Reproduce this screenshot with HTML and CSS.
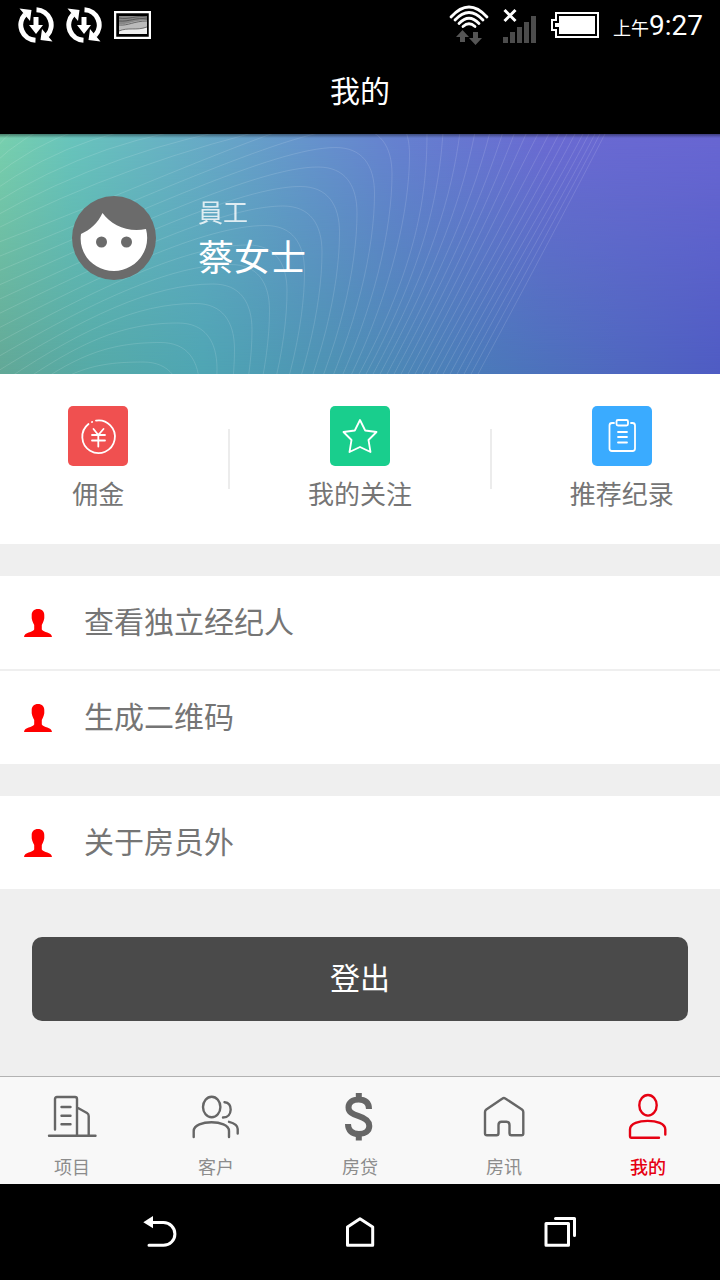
FILE: index.html
```html
<!DOCTYPE html>
<html lang="zh-CN">
<head>
    <meta charset="UTF-8">
    <meta name="viewport" content="width=device-width, initial-scale=1.0">
    <title>我的</title>
    <link rel="stylesheet" href="styles.css">
</head>
<body>
    <!-- Shared shapes -->
    <svg class="sprite" width="0" height="0" aria-hidden="true">
        <symbol id="sync" viewBox="0 0 36 36">
            <path d="M17.500 33.300A15.300 15.300 0 0 1 7 7.500" fill="none" stroke="#fff" stroke-width="5"/>
            <path d="M18.500 2.700A15.300 15.300 0 0 1 29 28.500" fill="none" stroke="#fff" stroke-width="5"/>
            <path d="M1.500 1.500L13.500 3L12 14Z M34.500 34.500L22.500 33L24 22Z" fill="#fff"/>
            <path d="M15.500 10H20.500V18H25L18 27L11 18H15.500Z" fill="#fff"/>
        </symbol>
        <symbol id="person" viewBox="0 0 28 28">
            <path d="M14 0C18 0 20.500 2.500 20.300 6.500C20.800 10.500 19 13.500 17.800 16V20.500C19.500 23.800 27.500 22.800 28 28H0C.5 22.800 8.500 23.800 10.200 20.500V16C9 13.500 7.200 10.500 7.700 6.500C7.500 2.500 10 0 14 0Z" fill="#f00"/>
        </symbol>
    </svg>

    <div class="status-bar">
        <div class="status-group">
            <svg width="36" height="36"><use href="#sync"/></svg>
            <svg width="36" height="36"><use href="#sync"/></svg>
            <svg width="37" height="28" viewBox="0 0 37 28">
                <rect x="1" y="1" width="35" height="26" fill="#000" stroke="#fff" stroke-width="2.500"/>
                <rect x="5" y="5" width="28" height="18" fill="#888"/>
                <path d="M5 13C14 14 20 9 33 9V23H5Z" fill="#bbb"/>
                <path d="M5 20C14 16 22 20 33 16V23H5Z" fill="#eee"/>
                <path d="M5 7C15 9 22 4 33 6M5 10C15 11 22 6 33 8M5 14C14 15 20 10 33 10M5 20C14 16 22 20 33 16" fill="none" stroke="#444" stroke-width=".7"/>
            </svg>
        </div>
        <div class="status-group">
            <svg width="40" height="40" viewBox="0 0 40 40">
                <g fill="none" stroke="#fff" stroke-width="2.800" stroke-linecap="round">
                    <path d="M2 12Q20 -8 38 12"/>
                    <path d="M6 15Q20 0 34 15"/>
                    <path d="M10 18.500Q20 8 30 18.500"/>
                    <path d="M14 21.500Q20 16 26 21.500"/>
                </g>
                <path d="M13.500 25L20 32H16V37H11V32H7Z M24 27H29V33H33L26.500 40L20 33H24Z" fill="#555"/>
            </svg>
            <svg width="34" height="36" viewBox="0 0 34 36">
                <path d="M0 30H5V36H0Z M7 25H12V36H7Z M14 20H19V36H14Z M21 15H26V36H21Z M28 9H33V36H28Z" fill="#4c4c4c"/>
                <path d="M1.500 3L12.500 14M12.500 3L1.500 14" stroke="#fff" stroke-width="3"/>
            </svg>
            <svg width="48" height="26" viewBox="0 0 48 26">
                <path d="M5 1H47V25H5V18H1V8H5Z" fill="#000" stroke="#fff" stroke-width="2"/>
                <path d="M8 4H44V22H8V15H4V11H8Z" fill="#fff"/>
            </svg>
            <div class="clock"><span class="clock-period">上午</span>9:27</div>
        </div>
    </div>

    <header class="title-bar">
        <h1>我的</h1>
    </header>

    <main>
        <section class="profile">
            <svg class="waves" id="waves" viewBox="0 0 720 240" preserveAspectRatio="none" aria-hidden="true"></svg>
            <svg class="avatar" width="84" height="84" viewBox="0 0 84 84">
                <circle cx="42" cy="42" r="42" fill="#6b6b6b"/>
                <path d="M9 38C18 34 26 27 30.500 17C39 29 56 37 74 33C80 56 62 75 42 75C22 75 6 58 9 38Z" fill="#fff"/>
                <circle cx="29.500" cy="46" r="5.500" fill="#6b6b6b"/>
                <circle cx="54.500" cy="46" r="5.500" fill="#6b6b6b"/>
            </svg>
            <div class="profile-text">
                <p class="role">員工</p>
                <p class="name">蔡女士</p>
            </div>
        </section>

        <section class="shortcuts">
            <a class="shortcut" href="#">
                <svg class="shortcut-icon red" width="60" height="60" viewBox="0 0 60 60">
                    <path d="M28 14.700A16.300 16.300 0 1 1 20.500 18"/>
                    <path d="M24 16L24.200 15.900"/>
                    <path d="M25.500 23L30.300 29L35.500 23M24 29H37M24 34.500H37M30.300 29V40.500"/>
                </svg>
                <span>佣金</span>
            </a>
            <span class="divider"></span>
            <a class="shortcut" href="#">
                <svg class="shortcut-icon green" width="60" height="60" viewBox="0 0 60 60">
                    <path d="M30 14L35.200 24.500L46.500 26L38.500 34L40.500 46L30 41L19.500 46L21.500 34L13.500 26L24.800 24.500Z"/>
                </svg>
                <span>我的关注</span>
            </a>
            <span class="divider"></span>
            <a class="shortcut" href="#">
                <svg class="shortcut-icon blue" width="60" height="60" viewBox="0 0 60 60">
                    <path d="M22 17H20Q17.500 17 17.500 19.500V42.500Q17.500 45 20 45H40.500Q43 45 43 42.500V19.500Q43 17 40.500 17H39"/>
                    <rect x="24.500" y="14" width="11.500" height="5.500" rx="1.500"/>
                    <path d="M26 26H35M26 31H35M26 36.500H35"/>
                </svg>
                <span>推荐纪录</span>
            </a>
        </section>

        <nav class="menu">
            <a class="menu-item" href="#"><svg width="28" height="28"><use href="#person"/></svg>查看独立经纪人</a>
            <a class="menu-item" href="#"><svg width="28" height="28"><use href="#person"/></svg>生成二维码</a>
        </nav>
        <nav class="menu">
            <a class="menu-item" href="#"><svg width="28" height="28"><use href="#person"/></svg>关于房员外</a>
        </nav>

        <button class="logout" type="button">登出</button>
    </main>

    <nav class="tab-bar">
        <a class="tab" href="#">
            <svg width="48" height="48" viewBox="0 0 48 48">
                <path d="M7 37.500V7Q7 5 9 5H27Q29 5 29 7V43.500M1 43.700H47.500M13.500 15H22.500M13.500 23.700H22.500M13.500 32.300H22.500M30 16L39 21Q40.700 22 40.700 24V43"/>
            </svg>
            <span>项目</span>
        </a>
        <a class="tab" href="#">
            <svg width="48" height="48" viewBox="0 0 48 48">
                <ellipse cx="19.700" cy="15" rx="8.700" ry="10.300"/>
                <path d="M1.700 45V39C1.700 33 11 30.300 19.500 30.300S37 33 37 39V45M32.500 10.300C41 10 41 25.500 31 25.500M37 29.800C42 31 45.700 33 45.700 37V41.500"/>
            </svg>
            <span>客户</span>
        </a>
        <a class="tab" href="#">
            <svg class="bold" width="48" height="48" viewBox="0 0 48 48">
                <path d="M33 17C33 10.500 29 7.500 22.800 7.500C16.500 7.500 12.500 10.500 12.500 15.300C12.500 20 16 22 22.800 24.200C30 26.400 33.300 29 33.300 34C33.300 39 29 42 22.800 42C16 42 12 38.500 12 32M22.800 1V8M22.800 41V48.500"/>
            </svg>
            <span>房贷</span>
        </a>
        <a class="tab" href="#">
            <svg width="48" height="48" viewBox="0 0 48 48">
                <path d="M22.500 6.500Q23.900 5.500 25.300 6.500L42 17.500Q43.300 18.400 43.300 20V41.500Q43.300 43.300 41.500 43.300H31.500Q29.500 43.300 29.500 41.300V33Q29.500 29.700 26.500 29.700H21.500Q18.500 29.700 18.500 33V41.300Q18.500 43.300 16.500 43.300H7Q5 43.300 5 41.500V20Q5 18.400 6.300 17.500Z"/>
            </svg>
            <span>房讯</span>
        </a>
        <a class="tab active" href="#">
            <svg width="48" height="48" viewBox="0 0 48 48">
                <ellipse cx="24" cy="13.300" rx="8.700" ry="10.300"/>
                <path d="M35 45.700H7.500Q6 45.700 6 44V37.500C6 31.500 15 28.900 23.700 28.900S41.300 31.500 41.300 37.500V42.500"/>
            </svg>
            <span>我的</span>
        </a>
    </nav>

    <div class="system-nav">
        <button type="button" aria-label="返回">
            <svg width="36" height="36" viewBox="0 0 36 36">
                <path d="M10 8.500H21.500A11.400 11.400 0 0 1 21.500 31.300H7"/>
                <path d="M1.300 8.300L11 2V14.300Z" fill="#fff" stroke="none"/>
            </svg>
        </button>
        <button type="button" aria-label="主页">
            <svg width="36" height="36" viewBox="0 0 36 36">
                <path d="M5.500 31.300V13L18 4.800L30.700 13V31.300Z"/>
            </svg>
        </button>
        <button type="button" aria-label="最近">
            <svg width="36" height="36" viewBox="0 0 36 36">
                <path d="M4 9.500H26.500V31.300H4ZM13.500 4.500H32.500V21.500"/>
            </svg>
        </button>
    </div>

    <script src="waves.js"></script>
</body>
</html>
```

FILE: styles.css
```css
:root {
    --accent: #e60012;
    --text-color: #757575;
    --icon-color: #666;
    --page-color: #efefef;
}

* {
    box-sizing: border-box;
    margin: 0;
    padding: 0;
}

body {
    display: flex;
    flex-direction: column;
    min-height: 100vh;
    font-family: Roboto, "Noto Sans CJK SC", sans-serif;
    background-color: var(--page-color);
    color: var(--text-color);
}

a {
    color: inherit;
    text-decoration: none;
}

svg {
    flex: none;
}

button {
    border: none;
    font-family: inherit;
    cursor: pointer;
}

.sprite {
    position: absolute;
}

.status-bar {
    display: flex;
    justify-content: space-between;
    align-items: center;
    height: 50px;
    padding: 0 17px 0 18px;
    background: #000;
    color: #fff;
}

.status-group {
    display: flex;
    align-items: center;
    gap: 12px;
}

.status-group + .status-group {
    gap: 14px;
}

.clock {
    padding-top: 4px;
    font-size: 28px;
    line-height: 36px;
}

.clock-period {
    font-size: 18px;
}

.title-bar {
    display: flex;
    justify-content: center;
    align-items: center;
    height: 84px;
    background: #000;
    color: #fff;
}

.title-bar h1 {
    font-size: 30px;
    font-weight: 400;
    line-height: 40px;
}

main {
    flex: 1;
}

/* Profile banner: the upper gradient fades into the lower one */
.profile {
    position: relative;
    display: flex;
    align-items: flex-start;
    gap: 42px;
    height: 240px;
    padding: 62px 72px;
    background: linear-gradient(to right, #62a897 0%, #55aaa8 13%, #4fa6b4 28%, #4e93b4 46%, #4b7aba 67%, #4f68c0 86%, #4f5cc4 100%);
    color: #fff;
}

.profile::before {
    content: "";
    position: absolute;
    inset: 0;
    background: linear-gradient(to right, #78d0ae 0%, #68c4bc 10%, #68b0c4 24%, #6694cc 42%, #667fd0 56%, #6a6ad2 76%, #6866d2 100%);
    -webkit-mask-image: linear-gradient(to bottom, #000, transparent);
    mask-image: linear-gradient(to bottom, #000, transparent);
}

.profile::after {
    content: "";
    position: absolute;
    inset: 0 0 auto;
    height: 4px;
    background: linear-gradient(to bottom, rgba(0, 0, 0, 0.4), transparent);
}

.waves {
    position: absolute;
    inset: 0;
    width: 100%;
    height: 100%;
    fill: none;
    stroke: rgba(255, 255, 255, 0.13);
    stroke-width: 1;
}

.avatar,
.profile-text {
    position: relative;
}

.role {
    font-size: 25px;
    line-height: 36px;
    opacity: 0.8;
}

.name {
    font-size: 36px;
    line-height: 54px;
}

/* Shortcuts */
.shortcuts {
    display: grid;
    grid-template-columns: 3fr 1fr 3fr 1fr 3fr;
    background: #fff;
}

.shortcut {
    display: flex;
    flex-direction: column;
    align-items: center;
    gap: 8px;
    padding: 32px 0 28px;
    font-size: 26px;
    line-height: 42px;
    white-space: nowrap;
}

.shortcut-icon {
    border-radius: 5px;
    fill: none;
    stroke: #fff;
    stroke-width: 1.8;
    stroke-linecap: round;
    stroke-linejoin: round;
}

.red {
    background: #f05050;
}

.green {
    background: #19ce8d;
}

.blue {
    background: #3aabff;
}

.divider {
    align-self: center;
    justify-self: center;
    width: 2px;
    height: 60px;
    background: #ececec;
}

/* Menu rows */
.menu {
    margin-top: 32px;
    background: #fff;
}

.menu-item {
    display: flex;
    align-items: center;
    gap: 32px;
    height: 93px;
    padding: 0 24px;
    font-size: 30px;
    line-height: 40px;
}

.menu-item + .menu-item {
    height: 95px;
    border-top: 2px solid var(--page-color);
}

.logout {
    display: block;
    width: calc(100% - 64px);
    height: 84px;
    margin: 48px 32px;
    border-radius: 10px;
    background: #4a4a4a;
    color: #fff;
    font-size: 30px;
    line-height: 40px;
}

/* Bottom tabs */
.tab-bar {
    display: flex;
    border-top: 1px solid #b2b2b2;
    background: #f8f8f8;
}

.tab {
    flex: 1;
    display: flex;
    flex-direction: column;
    align-items: center;
    gap: 16px;
    padding: 15px 0 4px;
    font-size: 18px;
    line-height: 24px;
    color: #8c8c8c;
}

.tab svg {
    overflow: visible;
    fill: none;
    stroke: var(--icon-color);
    stroke-width: 2.4;
    stroke-linecap: round;
    stroke-linejoin: round;
}

.tab .bold {
    stroke-width: 6;
    stroke-linecap: butt;
}

.tab.active {
    color: var(--accent);
    font-weight: 500;
}

.tab.active svg {
    stroke: var(--accent);
}

.system-nav {
    display: flex;
    height: 96px;
    padding: 0 60px;
    background: #000;
}

.system-nav button {
    flex: 1;
    display: flex;
    justify-content: center;
    align-items: center;
    background: none;
}

.system-nav svg {
    fill: none;
    stroke: #fff;
    stroke-width: 3;
    stroke-linecap: round;
    stroke-linejoin: round;
}
```

FILE: waves.js
```javascript
// Contour lines behind the profile banner
const waves = document.getElementById('waves');
const paths = [];

// Lines that rise from the left edge, turn over and fall back
for (let i = -1; i < 14; i++) {
    const px = 143 + 17.5 * i;
    const py = 228 - 19.5 * i;
    const left = 300 - 14.5 * i;
    paths.push(`M-10 ${left} C${px * 0.4} ${left - 60} ${px - 60} ${py} ${px} ${py} `
        + `C${px + 27} ${py} ${px + 39} ${py + 18} ${px + 39} ${py + 46} `
        + `C${px + 39} ${py + 100} ${px + 22} ${py + 180} ${px - 20} ${py + 268}`);
}

// Lines in the top left corner that leave through the top edge
for (let i = 0; i < 9; i++) {
    const left = 98 - 13 * i;
    paths.push(`M-10 ${left} Q${130 - 13 * i} ${left - 72} ${290 - 30 * i} -10`);
}

// Lines that enter through the top edge and fan in towards the bottom
const tops = [427, 443, 460, 475, 490, 503, 515, 527, 539, 550, 560, 568, 576, 584, 590, 596, 601, 606];
tops.forEach((x, i) => {
    const bottom = 358 + 7 * i;
    const bend = Math.max(0, 1 - i / 8);
    paths.push(`M${x} -2 C${x - 32 * (1 - bend)} 60 ${bottom + 60} 130 ${bottom} 242`);
});

waves.innerHTML = paths.map(d => `<path d="${d}"/>`).join('');
```
